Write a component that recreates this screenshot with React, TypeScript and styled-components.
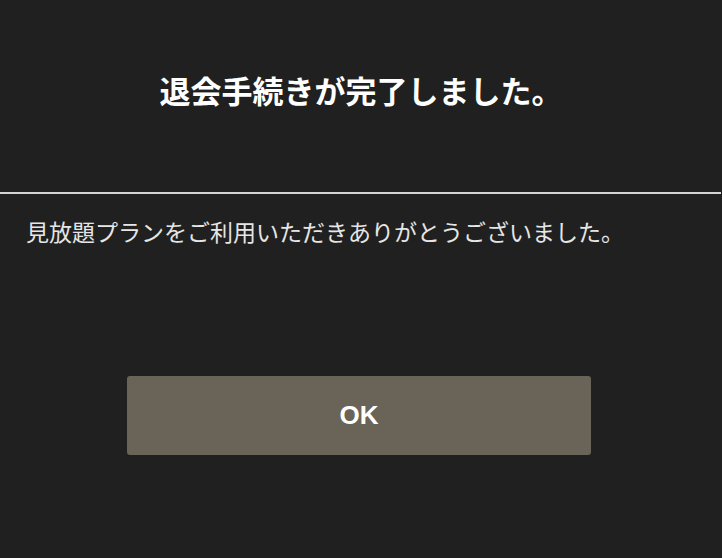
import React from "react";
import styled, { createGlobalStyle } from "styled-components";

const Global = createGlobalStyle`
  html, body { margin: 0; padding: 0; background: #202020; }
  body { font-family: "Noto Sans CJK JP", "Noto Sans", sans-serif; }
`;

const Page = styled.div`
  width: 722px;
  height: 558px;
  background: #202020;
  display: flex;
  flex-direction: column;
  overflow: hidden;
`;

const Header = styled.div`
  height: 192px;
  display: flex;
  align-items: center;
  justify-content: center;
  box-sizing: border-box;
`;

const Title = styled.h1`
  margin: 0 0 14px 0;
  color: #ffffff;
  font-size: 31px;
  font-weight: 700;
  line-height: 1;
`;

const Divider = styled.hr`
  margin: 0;
  border: none;
  height: 2px;
  width: 721px;
  background: #d4d4d4;
`;

const Message = styled.p`
  margin: 20px 0 0 0;
  padding-left: 26px;
  color: #e6e6e6;
  font-size: 23px;
  line-height: 34px;
`;

const Actions = styled.div`
  display: flex;
  justify-content: center;
  padding-top: 128px;
  padding-right: 4px;
`;

const Button = styled.button`
  width: 464px;
  height: 79px;
  border: none;
  border-radius: 3px;
  background: #6a6458;
  color: #ffffff;
  font-family: "Liberation Sans", Arial, sans-serif;
  font-weight: 700;
  font-size: 26px;
  cursor: pointer;
`;

export default function App() {
  return (
    <>
      <Global />
      <Page>
        <Header>
          <Title>退会手続きが完了しました。</Title>
        </Header>
        <Divider />
        <Message>見放題プランをご利用いただきありがとうございました。</Message>
        <Actions>
          <Button>OK</Button>
        </Actions>
      </Page>
    </>
  );
}
